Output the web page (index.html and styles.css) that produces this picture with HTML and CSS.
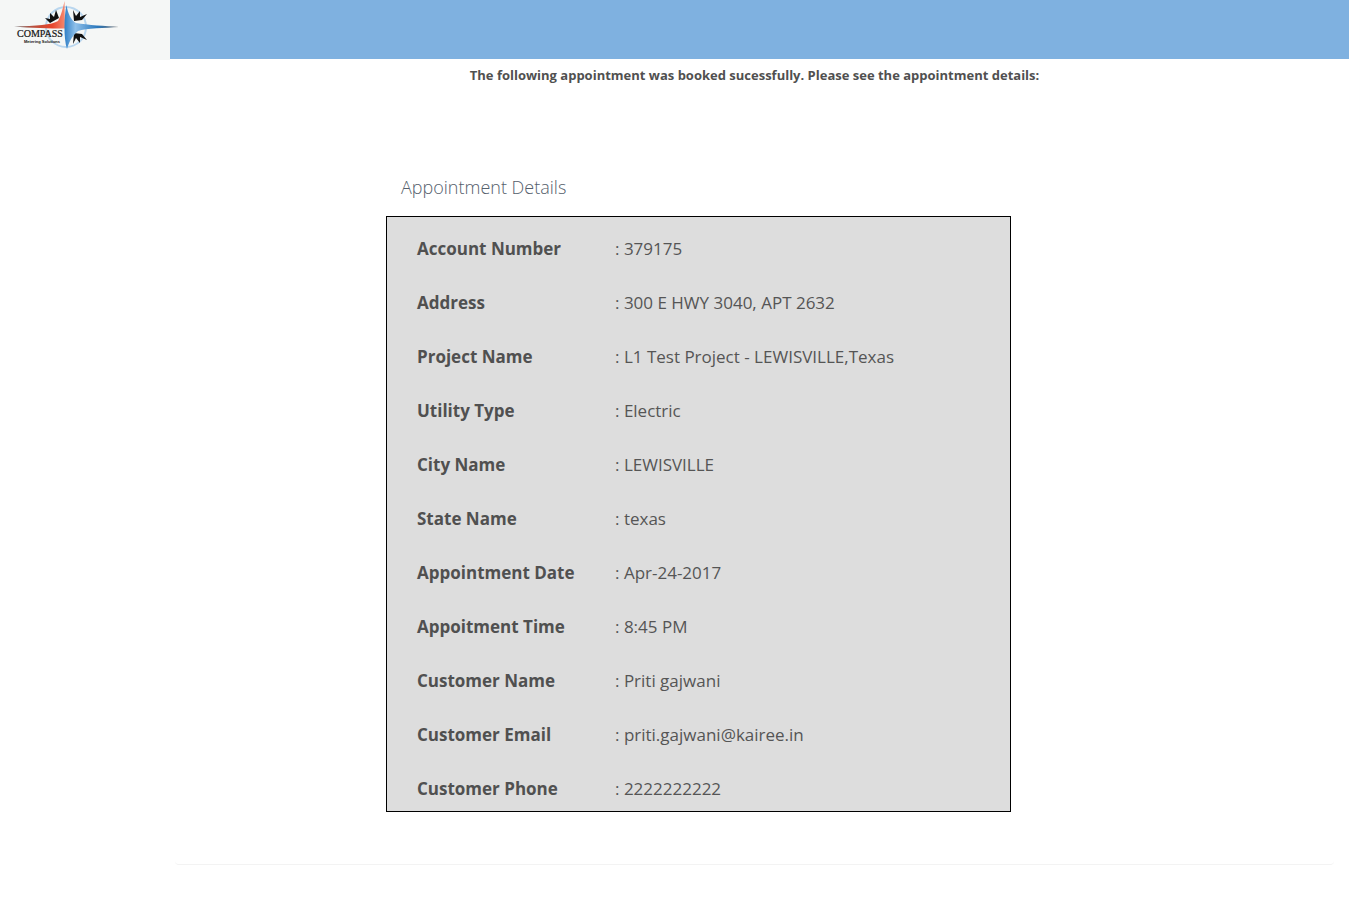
FILE: index.html
```html
<!DOCTYPE html>
<html lang="en">
<head>
<meta charset="utf-8">
<title>Appointment Details</title>
<link rel="stylesheet" href="styles.css">
</head>
<body>
<header class="topbar">
  <div class="logo">
    <svg class="logo-mark" width="170" height="60" viewBox="0 0 170 60" aria-hidden="true">
      <defs>
        <linearGradient id="red" x1="0" y1="0" x2="1" y2="0">
          <stop offset="0" stop-color="#6a6a6a"/>
          <stop offset="0.35" stop-color="#b5503f"/>
          <stop offset="0.75" stop-color="#e8452c"/>
          <stop offset="1" stop-color="#f58a70"/>
        </linearGradient>
        <linearGradient id="blue" x1="0" y1="0" x2="1" y2="0">
          <stop offset="0" stop-color="#2f7fc6"/>
          <stop offset="0.2" stop-color="#8fc0ea"/>
          <stop offset="0.6" stop-color="#2a78bd"/>
          <stop offset="1" stop-color="#666"/>
        </linearGradient>
      </defs>
      <circle cx="66" cy="27" r="20" fill="none" stroke="#b9d6ee" stroke-width="2"/>
      <g fill="#111">
        <path d="M45 18 L50 19 L50 13 L54 17 L56 10 L59 18 L50 23 Z"/>
        <path d="M73 10 L76 16 L80 11 L80 17 L87 14 L82 20 L74 21 Z"/>
        <path d="M73 44 L76 38 L80 43 L80 37 L87 40 L82 34 L74 33 Z"/>
      </g>
      <path d="M14 26.5 C36 26 52 25 58 21 C61 16 63 8 64.5 1 L65 28.5 C50 28.5 30 28 14 26.5 Z" fill="url(#red)"/>
      <path d="M66.5 5 C68 14 71 20 76 23 C88 25 105 26 119 27 C105 28 86 28 78 31 C72 36 69 42 67 49 C63.5 38 64 16 66.5 5 Z" fill="url(#blue)"/>
    </svg>
    <span class="logo-name">COMPASS</span>
    <span class="logo-sub">Metering Solutions</span>
  </div>
  <div class="bar"></div>
</header>
<main class="content">
  <section class="card">
    <p class="notice">The following appointment was booked sucessfully. Please see the appointment details:</p>
    <div class="details">
      <h2 class="details-title">Appointment Details</h2>
      <dl class="details-box">
        <div class="row"><dt>Account Number</dt><dd>: 379175</dd></div>
        <div class="row"><dt>Address</dt><dd>: 300 E HWY 3040, APT 2632</dd></div>
        <div class="row"><dt>Project Name</dt><dd>: L1 Test Project - LEWISVILLE,Texas</dd></div>
        <div class="row"><dt>Utility Type</dt><dd>: Electric</dd></div>
        <div class="row"><dt>City Name</dt><dd>: LEWISVILLE</dd></div>
        <div class="row"><dt>State Name</dt><dd>: texas</dd></div>
        <div class="row"><dt>Appointment Date</dt><dd>: Apr-24-2017</dd></div>
        <div class="row"><dt>Appoitment Time</dt><dd>: 8:45 PM</dd></div>
        <div class="row"><dt>Customer Name</dt><dd>: Priti gajwani</dd></div>
        <div class="row"><dt>Customer Email</dt><dd>: priti.gajwani@kairee.in</dd></div>
        <div class="row"><dt>Customer Phone</dt><dd>: 2222222222</dd></div>
      </dl>
    </div>
  </section>
</main>
</body>
</html>
```
FILE: styles.css
```css
* { box-sizing: border-box; }
html, body { margin: 0; padding: 0; }
body {
  background: #fff;
  color: #505050;
  font-family: "Open Sans", "Liberation Sans", sans-serif;
  height: 918px;
  overflow: hidden;
}
.topbar { display: flex; height: 60px; align-items: flex-start; }
.logo { position: relative; flex: 0 0 170px; height: 60px; background: #f5f7f6; }
.logo-mark { display: block; filter: blur(0.35px); }
.logo-name {
  position: absolute; left: 17px; top: 28px;
  font: 10px/12px "Liberation Serif", serif;
  color: #111;
  -webkit-text-stroke: 0.2px #111;
}
.logo-sub {
  position: absolute; left: 24px; top: 39px;
  font: bold 4px/5px "Liberation Sans", sans-serif;
  color: #111;
}
.bar { flex: 1; height: 59px; background: #7fb1e0; }
.content { padding: 0 15px 0 175px; }
.card {
  height: 805px;
  border-bottom: 1px solid #f3f3f3;
  border-radius: 0 0 4px 4px;
  padding-top: 6px;
}
.notice {
  margin: 0;
  text-align: center;
  font-size: 13px;
  line-height: 18px;
  font-weight: 700;
}
.details { margin: 91px 0 0 211px; width: 625px; }
.details-title {
  margin: 0 0 16px 15px;
  font-size: 18px;
  line-height: 25px;
  font-weight: 300;
  color: #55606c;
}
.details-box {
  margin: 0;
  height: 596px;
  background: #dddddd;
  border: 1px solid #000;
  padding: 4px 30px 0;
  overflow: hidden;
}
.row { display: flex; height: 54px; align-items: center; font-size: 17px; }
.row dt { flex: 0 0 198px; font-weight: 700; }
.row dd { margin: 0; color: #555; }
```
